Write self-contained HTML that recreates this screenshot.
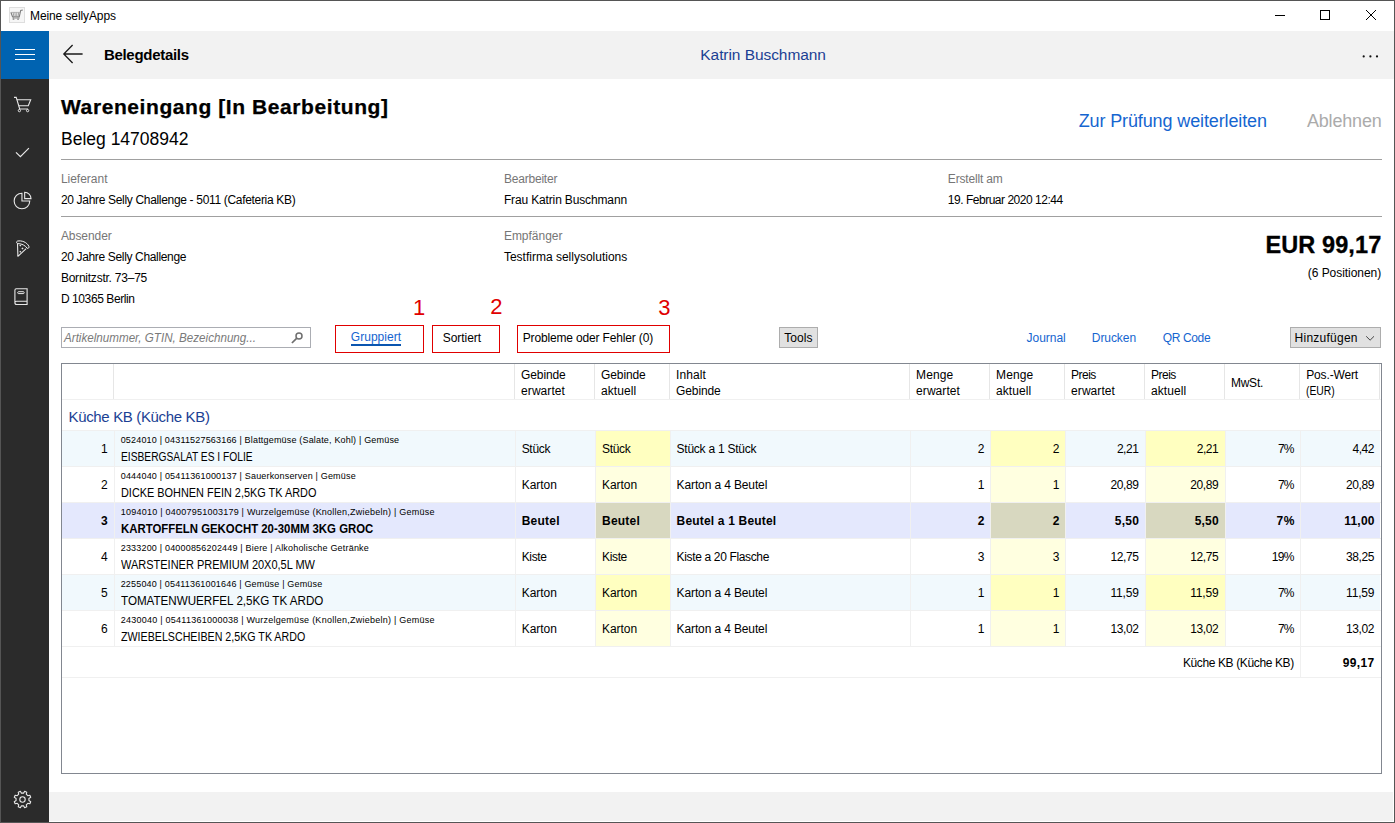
<!DOCTYPE html>
<html lang="de">
<head>
<meta charset="utf-8">
<title>Meine sellyApps</title>
<style>
html,body{margin:0;padding:0;}
body{width:1395px;height:823px;overflow:hidden;background:#fff;font-family:"Liberation Sans",sans-serif;color:#000;}
#win{position:relative;width:1395px;height:823px;overflow:hidden;background:#fff;}
.a{position:absolute;}
.t{position:absolute;white-space:nowrap;transform-origin:0 0;}
#frame{left:0;top:0;width:1393px;height:821px;border:1px solid #555;z-index:50;pointer-events:none;}
#side{left:1px;top:31px;width:48px;height:791px;background:#2b2b2b;}
#burger{left:1px;top:31px;width:48px;height:48px;background:#0063b1;}
#top{left:49px;top:31px;width:1345px;height:48px;background:#f2f2f2;}
#foot{left:49px;top:792px;width:1344px;height:29px;background:#f2f2f2;}
.hr{height:1px;background:#a0a0a0;left:61px;width:1321px;}
.rb{border:1px solid #e00000;box-sizing:border-box;}
.btn{background:#e1e1e1;border:1px solid #adadad;box-sizing:border-box;}
#search{left:61px;top:327px;width:250px;height:21px;border:1px solid #abadb3;box-sizing:border-box;background:#fff;}
#grid{left:61px;top:363px;width:1321px;height:411px;border:1px solid #828790;box-sizing:border-box;background:#fff;}
.c{position:absolute;}
.hl{position:absolute;height:1px;background:#f0f0f0;}
.vl{position:absolute;width:1px;background:#f0f0f0;}
svg{position:absolute;overflow:visible;}
</style>
</head>
<body>
<div id="win">
<!-- title bar -->
<svg class="a" style="left:9px;top:7px" width="16" height="16" viewBox="0 0 16 16">
 <rect x="0.5" y="0.5" width="15" height="15" fill="#f6f6f6" stroke="#dedede"/>
 <path d="M1.9 5.3 L3.5 9.8 H10.3 L11.7 3.5 L13.8 3" fill="none" stroke="#7d7d7d" stroke-width="1.1"/>
 <path d="M2.2 5.4 H11" fill="none" stroke="#a8a8a8" stroke-width="0.8"/>
 <path d="M4.1 5.4 L4.9 9.6 M5.9 5.4 L6.3 9.6 M7.8 5.4 L7.7 9.6 M9.7 5.4 L9.1 9.6" stroke="#999" stroke-width="0.9" fill="none"/>
 <path d="M3.4 11 H10.6" stroke="#8c8c8c" stroke-width="1"/>
 <path d="M4.5 9.8 V12.9 M9.1 9.8 V12.9 M3.6 12.4 H5.4 M8.2 12.4 H10" stroke="#9a9a9a" stroke-width="0.9"/>
</svg>
<svg class="a" style="left:1275px;top:10px" width="102" height="11" viewBox="0 0 102 11">
 <path d="M0 5.5 H10" stroke="#000" stroke-width="1"/>
 <rect x="45.5" y="0.5" width="9" height="9" fill="none" stroke="#000" stroke-width="1"/>
 <path d="M91 0 L101 10 M101 0 L91 10" stroke="#000" stroke-width="1"/>
</svg>
<!-- sidebar -->
<div class="a" id="side"></div>
<div class="a" id="burger"></div>
<svg class="a" style="left:15px;top:49px" width="20" height="11" viewBox="0 0 20 11">
 <path d="M0 0.5 H20 M0 5.5 H20 M0 10.5 H20" stroke="#fff" stroke-width="1"/>
</svg>

<svg class="a" style="left:14px;top:96px" width="18" height="17" viewBox="0 0 18 17">
 <path d="M0 1.4 H2.2 L5.7 13 H14" fill="none" stroke="#e8e8e8" stroke-width="1.1"/>
 <path d="M2.9 3.7 H16.7 L14.3 9.8 H4.7" fill="none" stroke="#e8e8e8" stroke-width="1.1"/>
 <circle cx="5.4" cy="14.6" r="1.15" fill="none" stroke="#e8e8e8" stroke-width="1"/>
 <circle cx="13.6" cy="14.6" r="1.15" fill="none" stroke="#e8e8e8" stroke-width="1"/>
</svg>
<svg class="a" style="left:15px;top:147px" width="15" height="11" viewBox="0 0 15 11">
 <path d="M1 5.3 L5.4 9.7 L13.9 1.2" fill="none" stroke="#e8e8e8" stroke-width="1.2"/>
</svg>
<svg class="a" style="left:13px;top:191px" width="19" height="19" viewBox="0 0 19 19">
 <path d="M8.95 2.2 A7.8 7.8 0 1 0 16.75 10 H8.95 Z" fill="none" stroke="#e8e8e8" stroke-width="1.1"/>
 <path d="M11.67 1.3 A6.3 6.3 0 0 1 17.97 7.6 H11.67 Z" fill="none" stroke="#e8e8e8" stroke-width="1.1"/>
</svg>
<svg class="a" style="left:16px;top:239px" width="14" height="19" viewBox="0 0 14 19">
 <path d="M1.4 2.1 C5.6 1.2 10.8 3.1 12.9 7.3 C13.4 8.6 12.3 9.8 11.2 9.3 C9.4 6.5 5.6 4.5 1.8 4.6 C0.3 4.4 0.2 2.5 1.4 2.1 Z" fill="none" stroke="#f2f2f2" stroke-width="1"/>
 <path d="M1.5 4.5 L1.9 17.3 L10.2 9.7" fill="none" stroke="#e8e8e8" stroke-width="1.1" stroke-linejoin="round"/>
 <path d="M4.3 5.6 L5.3 6.6 L4.3 7.6 L3.3 6.6 Z M6.5 8.4 L7.6 9.5 L6.5 10.6 L5.4 9.5 Z M4.3 11.7 L5.3 12.7 L4.3 13.7 L3.3 12.7 Z" fill="#e8e8e8"/>
</svg>
<svg class="a" style="left:14px;top:287px" width="15" height="19" viewBox="0 0 15 19">
 <path d="M0.9 15.8 V3.2 Q0.9 1.8 2.3 1.8 H13.1 V17.5 H2.6 Q0.9 17.5 0.9 15.8 Q0.9 14.2 2.6 14.2 H13.1" fill="none" stroke="#e8e8e8" stroke-width="1.1"/>
 <rect x="3.7" y="4.7" width="6.5" height="1.9" rx="0.9" fill="none" stroke="#e8e8e8" stroke-width="1"/>
</svg>
<svg class="a" style="left:13px;top:790px" width="19" height="19" viewBox="-9.5 -9.5 19 19">
 <path d="M6.41 1.07 L8.22 2.18 L7.35 4.27 L5.29 3.78 L3.78 5.29 L4.27 7.35 L2.18 8.22 L1.07 6.41 L-1.07 6.41 L-2.18 8.22 L-4.27 7.35 L-3.78 5.29 L-5.29 3.78 L-7.35 4.27 L-8.22 2.18 L-6.41 1.07 L-6.41 -1.07 L-8.22 -2.18 L-7.35 -4.27 L-5.29 -3.78 L-3.78 -5.29 L-4.27 -7.35 L-2.18 -8.22 L-1.07 -6.41 L1.07 -6.41 L2.18 -8.22 L4.27 -7.35 L3.78 -5.29 L5.29 -3.78 L7.35 -4.27 L8.22 -2.18 L6.41 -1.07 Z" fill="none" stroke="#e8e8e8" stroke-width="1.1" stroke-linejoin="round"/>
 <circle cx="0" cy="0" r="2.7" fill="none" stroke="#e8e8e8" stroke-width="1.1"/>
</svg>

<!-- top bar -->
<div class="a" id="top"></div>
<svg class="a" style="left:63px;top:44px" width="20" height="20" viewBox="0 0 20 20">
 <path d="M0.8 10 H19.6 M9.6 1 L0.8 10 L9.6 19" fill="none" stroke="#1a1a1a" stroke-width="1.3"/>
</svg>
<svg class="a" style="left:1362px;top:55px" width="16" height="3" viewBox="0 0 16 3">
 <circle cx="1.7" cy="1.4" r="1.1" fill="#111"/><circle cx="8.4" cy="1.4" r="1.1" fill="#111"/><circle cx="15" cy="1.4" r="1.1" fill="#111"/>
</svg>
<!-- content rules -->
<div class="a hr" style="top:159px"></div>
<div class="a hr" style="top:216px"></div>
<!-- toolbar -->
<div class="a" id="search"></div>
<svg class="a" style="left:291px;top:332px" width="12" height="12" viewBox="0 0 12 12">
 <circle cx="8" cy="3.9" r="3" fill="none" stroke="#6e6e6e" stroke-width="1.5"/>
 <path d="M5.6 6.3 L0.9 11" stroke="#6e6e6e" stroke-width="1.7"/>
</svg>
<div class="a rb" style="left:335px;top:325px;width:89px;height:28px"></div>
<div class="a" style="left:351px;top:344px;width:50px;height:2px;background:#0a55b0"></div>
<div class="a rb" style="left:432px;top:325px;width:68px;height:28px"></div>
<div class="a rb" style="left:517px;top:325px;width:153px;height:28px"></div>
<div class="a btn" style="left:779px;top:327px;width:39px;height:21px"></div>
<div class="a btn" style="left:1290px;top:327px;width:91px;height:21px"></div>
<svg class="a" style="left:1366px;top:336px" width="9" height="5" viewBox="0 0 9 5">
 <path d="M0.2 0.3 L4.1 4.2 L8 0.3" fill="none" stroke="#444" stroke-width="1"/>
</svg>
<!-- grid -->
<div class="a" id="grid">
<div class="c" style="left:0px;top:67px;width:1318px;height:35px;background:#f1f9fd"></div>
<div class="c" style="left:534px;top:67px;width:74px;height:35px;background:#ffffc0"></div>
<div class="c" style="left:929px;top:67px;width:74px;height:35px;background:#ffffc0"></div>
<div class="c" style="left:1084px;top:67px;width:79px;height:35px;background:#ffffc0"></div>
<div class="c" style="left:534px;top:103px;width:74px;height:35px;background:#ffffe0"></div>
<div class="c" style="left:929px;top:103px;width:74px;height:35px;background:#ffffe0"></div>
<div class="c" style="left:1084px;top:103px;width:79px;height:35px;background:#ffffe0"></div>
<div class="c" style="left:0px;top:139px;width:1318px;height:35px;background:#e4e8fd"></div>
<div class="c" style="left:534px;top:139px;width:74px;height:35px;background:#d8d8c0"></div>
<div class="c" style="left:929px;top:139px;width:74px;height:35px;background:#d8d8c0"></div>
<div class="c" style="left:1084px;top:139px;width:79px;height:35px;background:#d8d8c0"></div>
<div class="c" style="left:534px;top:175px;width:74px;height:35px;background:#ffffe0"></div>
<div class="c" style="left:929px;top:175px;width:74px;height:35px;background:#ffffe0"></div>
<div class="c" style="left:1084px;top:175px;width:79px;height:35px;background:#ffffe0"></div>
<div class="c" style="left:0px;top:211px;width:1318px;height:35px;background:#f1f9fd"></div>
<div class="c" style="left:534px;top:211px;width:74px;height:35px;background:#ffffc0"></div>
<div class="c" style="left:929px;top:211px;width:74px;height:35px;background:#ffffc0"></div>
<div class="c" style="left:1084px;top:211px;width:79px;height:35px;background:#ffffc0"></div>
<div class="c" style="left:534px;top:247px;width:74px;height:35px;background:#ffffe0"></div>
<div class="c" style="left:929px;top:247px;width:74px;height:35px;background:#ffffe0"></div>
<div class="c" style="left:1084px;top:247px;width:79px;height:35px;background:#ffffe0"></div>
<div class="hl" style="left:0px;top:35px;width:1319px"></div>
<div class="hl" style="left:0px;top:66px;width:1319px"></div>
<div class="hl" style="left:0px;top:102px;width:1319px"></div>
<div class="hl" style="left:0px;top:138px;width:1319px"></div>
<div class="hl" style="left:0px;top:174px;width:1319px"></div>
<div class="hl" style="left:0px;top:210px;width:1319px"></div>
<div class="hl" style="left:0px;top:246px;width:1319px"></div>
<div class="hl" style="left:0px;top:282px;width:1319px"></div>
<div class="hl" style="left:0px;top:313px;width:1319px"></div>
<div class="vl" style="left:51px;top:0px;height:35px;background:#e6e6e6"></div>
<div class="vl" style="left:52px;top:67px;height:215px"></div>
<div class="vl" style="left:452px;top:0px;height:35px;background:#e6e6e6"></div>
<div class="vl" style="left:453px;top:67px;height:215px"></div>
<div class="vl" style="left:532px;top:0px;height:35px;background:#e6e6e6"></div>
<div class="vl" style="left:533px;top:67px;height:215px"></div>
<div class="vl" style="left:607px;top:0px;height:35px;background:#e6e6e6"></div>
<div class="vl" style="left:608px;top:67px;height:215px"></div>
<div class="vl" style="left:847px;top:0px;height:35px;background:#e6e6e6"></div>
<div class="vl" style="left:848px;top:67px;height:215px"></div>
<div class="vl" style="left:927px;top:0px;height:35px;background:#e6e6e6"></div>
<div class="vl" style="left:928px;top:67px;height:215px"></div>
<div class="vl" style="left:1002px;top:0px;height:35px;background:#e6e6e6"></div>
<div class="vl" style="left:1003px;top:67px;height:215px"></div>
<div class="vl" style="left:1082px;top:0px;height:35px;background:#e6e6e6"></div>
<div class="vl" style="left:1083px;top:67px;height:215px"></div>
<div class="vl" style="left:1162px;top:0px;height:35px;background:#e6e6e6"></div>
<div class="vl" style="left:1163px;top:67px;height:215px"></div>
<div class="vl" style="left:1237px;top:0px;height:35px;background:#e6e6e6"></div>
<div class="vl" style="left:1238px;top:67px;height:215px"></div>
<div class="vl" style="left:1317px;top:0px;height:35px;background:#e6e6e6"></div>
<div class="vl" style="left:1238px;top:283px;height:30px"></div>
</div>
<div class="a" id="foot"></div>
<div class="grp" id="titlebar">
<span class="t" style="left:30.00px;top:8px;font-size:12px;line-height:17px;letter-spacing:-0.098px">Meine sellyApps</span>
</div>
<div class="grp" id="topbar">
<span class="t" style="left:103.90px;top:44px;font-size:15px;line-height:21px;font-weight:700;letter-spacing:-0.289px">Belegdetails</span>
<span class="t" style="left:700.30px;top:44px;font-size:15.5px;line-height:22px;color:#1b3f94;letter-spacing:-0.064px">Katrin Buschmann</span>
</div>
<div class="grp" id="doc-head">
<span class="t" style="left:61.00px;top:93px;font-size:20px;line-height:28px;font-weight:700;letter-spacing:0.553px;transform:scaleX(1.0500);-webkit-text-stroke:0.25px #000">Wareneingang [In Bearbeitung]</span>
<span class="t" style="left:61.00px;top:127px;font-size:17.5px;line-height:24px;letter-spacing:0.001px">Beleg 14708942</span>
<span class="t" style="left:1078.70px;top:109px;font-size:18px;line-height:25px;color:#1565d0;letter-spacing:-0.121px">Zur Prüfung weiterleiten</span>
<span class="t" style="left:1306.90px;top:109px;font-size:18px;line-height:25px;color:#ababab;letter-spacing:-0.168px">Ablehnen</span>
</div>
<div class="grp" id="doc-info">
<span class="t" style="left:60.90px;top:171px;font-size:12px;line-height:17px;color:#767676;letter-spacing:-0.013px">Lieferant</span>
<span class="t" style="left:60.90px;top:192px;font-size:12px;line-height:17px;letter-spacing:-0.321px">20 Jahre Selly Challenge - 5011 (Cafeteria KB)</span>
<span class="t" style="left:503.90px;top:171px;font-size:12px;line-height:17px;color:#767676;letter-spacing:-0.197px">Bearbeiter</span>
<span class="t" style="left:503.90px;top:192px;font-size:12px;line-height:17px;letter-spacing:-0.143px">Frau Katrin Buschmann</span>
<span class="t" style="left:947.80px;top:171px;font-size:12px;line-height:17px;color:#767676;letter-spacing:-0.169px">Erstellt am</span>
<span class="t" style="left:947.80px;top:192px;font-size:12px;line-height:17px;letter-spacing:-0.478px">19. Februar 2020 12:44</span>
<span class="t" style="left:60.90px;top:228px;font-size:12px;line-height:17px;color:#767676;letter-spacing:-0.068px">Absender</span>
<span class="t" style="left:60.90px;top:249px;font-size:12px;line-height:17px;letter-spacing:-0.344px">20 Jahre Selly Challenge</span>
<span class="t" style="left:60.90px;top:270px;font-size:12px;line-height:17px;letter-spacing:-0.229px">Bornitzstr. 73–75</span>
<span class="t" style="left:60.90px;top:291px;font-size:12px;line-height:17px;letter-spacing:-0.407px">D 10365 Berlin</span>
<span class="t" style="left:503.90px;top:228px;font-size:12px;line-height:17px;color:#767676;letter-spacing:-0.013px">Empfänger</span>
<span class="t" style="left:503.90px;top:249px;font-size:12px;line-height:17px;letter-spacing:0.001px">Testfirma sellysolutions</span>
</div>
<div class="grp" id="doc-total">
<span class="t" style="left:1265.50px;top:229px;font-size:23.5px;line-height:33px;font-weight:700;letter-spacing:0.093px;-webkit-text-stroke:0.3px #000">EUR 99,17</span>
<span class="t" style="left:1307.80px;top:265px;font-size:12px;line-height:17px;letter-spacing:-0.050px">(6 Positionen)</span>
</div>
<div class="grp" id="annotations">
<span class="t" style="left:413.10px;top:292px;font-size:22px;line-height:31px;color:#e00000">1</span>
<span class="t" style="left:490.30px;top:291px;font-size:22px;line-height:31px;color:#e00000">2</span>
<span class="t" style="left:658.30px;top:292px;font-size:22px;line-height:31px;color:#e00000">3</span>
</div>
<div class="grp" id="toolbar">
<span class="t" style="left:63.50px;top:329px;font-size:13px;line-height:18px;color:#7a7a7a;font-style:italic;transform:scaleX(0.8947)">Artikelnummer, GTIN, Bezeichnung...</span>
<span class="t" style="left:350.80px;top:329px;font-size:12px;line-height:17px;color:#1565d0;letter-spacing:0.034px">Gruppiert</span>
<span class="t" style="left:442.70px;top:330px;font-size:12px;line-height:17px;letter-spacing:-0.041px">Sortiert</span>
<span class="t" style="left:522.70px;top:330px;font-size:12px;line-height:17px;letter-spacing:-0.155px">Probleme oder Fehler (0)</span>
<span class="t" style="left:784.20px;top:330px;font-size:12px;line-height:17px;letter-spacing:0.071px">Tools</span>
<span class="t" style="left:1026.60px;top:330px;font-size:12px;line-height:17px;color:#1565d0;letter-spacing:-0.043px">Journal</span>
<span class="t" style="left:1091.80px;top:330px;font-size:12px;line-height:17px;color:#1565d0;letter-spacing:-0.065px">Drucken</span>
<span class="t" style="left:1162.70px;top:330px;font-size:12px;line-height:17px;color:#1565d0;letter-spacing:-0.355px">QR Code</span>
<span class="t" style="left:1294.60px;top:330px;font-size:12px;line-height:17px;letter-spacing:0.242px">Hinzufügen</span>
</div>
<div class="grp" id="grid-head">
<span class="t" style="left:521.10px;top:367px;font-size:12px;line-height:17px;letter-spacing:-0.132px">Gebinde</span>
<span class="t" style="left:521.10px;top:383px;font-size:12px;line-height:17px;letter-spacing:0.058px">erwartet</span>
<span class="t" style="left:601.10px;top:367px;font-size:12px;line-height:17px;letter-spacing:-0.132px">Gebinde</span>
<span class="t" style="left:601.10px;top:383px;font-size:12px;line-height:17px;letter-spacing:0.053px">aktuell</span>
<span class="t" style="left:676.10px;top:367px;font-size:12px;line-height:17px;letter-spacing:0.096px">Inhalt</span>
<span class="t" style="left:676.10px;top:383px;font-size:12px;line-height:17px;letter-spacing:-0.132px">Gebinde</span>
<span class="t" style="left:916.10px;top:367px;font-size:12px;line-height:17px;letter-spacing:0.114px">Menge</span>
<span class="t" style="left:916.10px;top:383px;font-size:12px;line-height:17px;letter-spacing:0.058px">erwartet</span>
<span class="t" style="left:996.10px;top:367px;font-size:12px;line-height:17px;letter-spacing:0.114px">Menge</span>
<span class="t" style="left:996.10px;top:383px;font-size:12px;line-height:17px;letter-spacing:0.053px">aktuell</span>
<span class="t" style="left:1071.10px;top:367px;font-size:12px;line-height:17px;letter-spacing:-0.546px">Preis</span>
<span class="t" style="left:1071.10px;top:383px;font-size:12px;line-height:17px;letter-spacing:0.058px">erwartet</span>
<span class="t" style="left:1151.10px;top:367px;font-size:12px;line-height:17px;letter-spacing:-0.546px">Preis</span>
<span class="t" style="left:1151.10px;top:383px;font-size:12px;line-height:17px;letter-spacing:0.053px">aktuell</span>
<span class="t" style="left:1306.20px;top:367px;font-size:12px;line-height:17px;letter-spacing:-0.142px">Pos.-Wert</span>
<span class="t" style="left:1306.20px;top:383px;font-size:12px;line-height:17px;transform:scaleX(0.8622)">(EUR)</span>
<span class="t" style="left:1230.90px;top:375px;font-size:12px;line-height:17px;letter-spacing:-0.227px">MwSt.</span>
</div>
<div class="grp" id="grid-group">
<span class="t" style="left:68.50px;top:406px;font-size:15px;line-height:21px;color:#1b3f94;letter-spacing:-0.343px">Küche KB (Küche KB)</span>
</div>
<div class="grp" id="grid-row-1">
<span class="t" style="left:101.11px;top:441px;font-size:12px;line-height:17px">1</span>
<span class="t" style="left:120.70px;top:434px;font-size:9px;line-height:13px;letter-spacing:0.178px">0524010 | 04311527563166 | Blattgemüse (Salate, Kohl) | Gemüse</span>
<span class="t" style="left:120.70px;top:449px;font-size:12px;line-height:17px;transform:scaleX(0.8530)">EISBERGSALAT ES I FOLIE</span>
<span class="t" style="left:521.70px;top:441px;font-size:12px;line-height:17px;letter-spacing:-0.323px">Stück</span>
<span class="t" style="left:602.00px;top:441px;font-size:12px;line-height:17px;letter-spacing:-0.323px">Stück</span>
<span class="t" style="left:676.60px;top:441px;font-size:12px;line-height:17px;letter-spacing:-0.250px">Stück a 1 Stück</span>
<span class="t" style="left:977.71px;top:441px;font-size:12px;line-height:17px">2</span>
<span class="t" style="left:1052.81px;top:441px;font-size:12px;line-height:17px">2</span>
<span class="t" style="left:1116.89px;top:441px;font-size:12px;line-height:17px;letter-spacing:-0.451px">2,21</span>
<span class="t" style="left:1196.69px;top:441px;font-size:12px;line-height:17px;letter-spacing:-0.451px">2,21</span>
<span class="t" style="left:1278.12px;top:441px;font-size:12px;line-height:17px;letter-spacing:-1.061px">7%</span>
<span class="t" style="left:1352.49px;top:441px;font-size:12px;line-height:17px;letter-spacing:-0.451px">4,42</span>
</div>
<div class="grp" id="grid-row-2">
<span class="t" style="left:101.11px;top:477px;font-size:12px;line-height:17px">2</span>
<span class="t" style="left:120.70px;top:470px;font-size:9px;line-height:13px;letter-spacing:0.183px">0444040 | 05411361000137 | Sauerkonserven | Gemüse</span>
<span class="t" style="left:120.70px;top:485px;font-size:12px;line-height:17px;transform:scaleX(0.9081)">DICKE BOHNEN FEIN 2,5KG TK ARDO</span>
<span class="t" style="left:521.70px;top:477px;font-size:12px;line-height:17px;letter-spacing:-0.048px">Karton</span>
<span class="t" style="left:602.00px;top:477px;font-size:12px;line-height:17px;letter-spacing:-0.048px">Karton</span>
<span class="t" style="left:676.60px;top:477px;font-size:12px;line-height:17px;letter-spacing:-0.124px">Karton a 4 Beutel</span>
<span class="t" style="left:977.71px;top:477px;font-size:12px;line-height:17px">1</span>
<span class="t" style="left:1052.81px;top:477px;font-size:12px;line-height:17px">1</span>
<span class="t" style="left:1110.42px;top:477px;font-size:12px;line-height:17px;letter-spacing:-0.389px">20,89</span>
<span class="t" style="left:1190.22px;top:477px;font-size:12px;line-height:17px;letter-spacing:-0.389px">20,89</span>
<span class="t" style="left:1278.12px;top:477px;font-size:12px;line-height:17px;letter-spacing:-1.061px">7%</span>
<span class="t" style="left:1346.02px;top:477px;font-size:12px;line-height:17px;letter-spacing:-0.389px">20,89</span>
</div>
<div class="grp" id="grid-row-3">
<span class="t" style="left:101.11px;top:513px;font-size:12px;line-height:17px;font-weight:700">3</span>
<span class="t" style="left:120.70px;top:506px;font-size:9px;line-height:13px;letter-spacing:0.239px">1094010 | 04007951003179 | Wurzelgemüse (Knollen,Zwiebeln) | Gemüse</span>
<span class="t" style="left:120.70px;top:521px;font-size:12px;line-height:17px;font-weight:700;transform:scaleX(0.9492)">KARTOFFELN GEKOCHT 20-30MM 3KG GROC</span>
<span class="t" style="left:521.70px;top:513px;font-size:12px;line-height:17px;font-weight:700;letter-spacing:0.220px">Beutel</span>
<span class="t" style="left:602.00px;top:513px;font-size:12px;line-height:17px;font-weight:700;letter-spacing:0.220px">Beutel</span>
<span class="t" style="left:676.60px;top:513px;font-size:12px;line-height:17px;font-weight:700;letter-spacing:0.181px">Beutel a 1 Beutel</span>
<span class="t" style="left:977.71px;top:513px;font-size:12px;line-height:17px;font-weight:700">2</span>
<span class="t" style="left:1052.81px;top:513px;font-size:12px;line-height:17px;font-weight:700">2</span>
<span class="t" style="left:1114.84px;top:513px;font-size:12px;line-height:17px;font-weight:700;letter-spacing:0.234px">5,50</span>
<span class="t" style="left:1194.64px;top:513px;font-size:12px;line-height:17px;font-weight:700;letter-spacing:0.234px">5,50</span>
<span class="t" style="left:1276.54px;top:513px;font-size:12px;line-height:17px;font-weight:700;letter-spacing:0.520px">7%</span>
<span class="t" style="left:1344.24px;top:513px;font-size:12px;line-height:17px;font-weight:700;letter-spacing:0.220px">11,00</span>
</div>
<div class="grp" id="grid-row-4">
<span class="t" style="left:101.11px;top:549px;font-size:12px;line-height:17px">4</span>
<span class="t" style="left:120.70px;top:542px;font-size:9px;line-height:13px;letter-spacing:0.189px">2333200 | 04000856202449 | Biere | Alkoholische Getränke</span>
<span class="t" style="left:120.70px;top:557px;font-size:12px;line-height:17px;transform:scaleX(0.9159)">WARSTEINER PREMIUM 20X0,5L MW</span>
<span class="t" style="left:521.70px;top:549px;font-size:12px;line-height:17px;letter-spacing:-0.348px">Kiste</span>
<span class="t" style="left:602.00px;top:549px;font-size:12px;line-height:17px;letter-spacing:-0.348px">Kiste</span>
<span class="t" style="left:676.60px;top:549px;font-size:12px;line-height:17px;letter-spacing:-0.351px">Kiste a 20 Flasche</span>
<span class="t" style="left:977.71px;top:549px;font-size:12px;line-height:17px">3</span>
<span class="t" style="left:1052.81px;top:549px;font-size:12px;line-height:17px">3</span>
<span class="t" style="left:1110.42px;top:549px;font-size:12px;line-height:17px;letter-spacing:-0.389px">12,75</span>
<span class="t" style="left:1190.22px;top:549px;font-size:12px;line-height:17px;letter-spacing:-0.389px">12,75</span>
<span class="t" style="left:1271.65px;top:549px;font-size:12px;line-height:17px;letter-spacing:-0.640px">19%</span>
<span class="t" style="left:1346.02px;top:549px;font-size:12px;line-height:17px;letter-spacing:-0.389px">38,25</span>
</div>
<div class="grp" id="grid-row-5">
<span class="t" style="left:101.11px;top:585px;font-size:12px;line-height:17px">5</span>
<span class="t" style="left:120.70px;top:578px;font-size:9px;line-height:13px;letter-spacing:0.171px">2255040 | 05411361001646 | Gemüse | Gemüse</span>
<span class="t" style="left:120.70px;top:593px;font-size:12px;line-height:17px;transform:scaleX(0.9687)">TOMATENWUERFEL 2,5KG TK ARDO</span>
<span class="t" style="left:521.70px;top:585px;font-size:12px;line-height:17px;letter-spacing:-0.048px">Karton</span>
<span class="t" style="left:602.00px;top:585px;font-size:12px;line-height:17px;letter-spacing:-0.048px">Karton</span>
<span class="t" style="left:676.60px;top:585px;font-size:12px;line-height:17px;letter-spacing:-0.124px">Karton a 4 Beutel</span>
<span class="t" style="left:977.71px;top:585px;font-size:12px;line-height:17px">1</span>
<span class="t" style="left:1052.81px;top:585px;font-size:12px;line-height:17px">1</span>
<span class="t" style="left:1110.42px;top:585px;font-size:12px;line-height:17px;letter-spacing:-0.166px">11,59</span>
<span class="t" style="left:1190.22px;top:585px;font-size:12px;line-height:17px;letter-spacing:-0.166px">11,59</span>
<span class="t" style="left:1278.12px;top:585px;font-size:12px;line-height:17px;letter-spacing:-1.061px">7%</span>
<span class="t" style="left:1346.02px;top:585px;font-size:12px;line-height:17px;letter-spacing:-0.166px">11,59</span>
</div>
<div class="grp" id="grid-row-6">
<span class="t" style="left:101.11px;top:621px;font-size:12px;line-height:17px">6</span>
<span class="t" style="left:120.70px;top:614px;font-size:9px;line-height:13px;letter-spacing:0.249px">2430040 | 05411361000038 | Wurzelgemüse (Knollen,Zwiebeln) | Gemüse</span>
<span class="t" style="left:120.70px;top:629px;font-size:12px;line-height:17px;transform:scaleX(0.8891)">ZWIEBELSCHEIBEN 2,5KG TK ARDO</span>
<span class="t" style="left:521.70px;top:621px;font-size:12px;line-height:17px;letter-spacing:-0.048px">Karton</span>
<span class="t" style="left:602.00px;top:621px;font-size:12px;line-height:17px;letter-spacing:-0.048px">Karton</span>
<span class="t" style="left:676.60px;top:621px;font-size:12px;line-height:17px;letter-spacing:-0.124px">Karton a 4 Beutel</span>
<span class="t" style="left:977.71px;top:621px;font-size:12px;line-height:17px">1</span>
<span class="t" style="left:1052.81px;top:621px;font-size:12px;line-height:17px">1</span>
<span class="t" style="left:1110.42px;top:621px;font-size:12px;line-height:17px;letter-spacing:-0.389px">13,02</span>
<span class="t" style="left:1190.22px;top:621px;font-size:12px;line-height:17px;letter-spacing:-0.389px">13,02</span>
<span class="t" style="left:1278.12px;top:621px;font-size:12px;line-height:17px;letter-spacing:-1.061px">7%</span>
<span class="t" style="left:1346.02px;top:621px;font-size:12px;line-height:17px;letter-spacing:-0.389px">13,02</span>
</div>
<div class="grp" id="grid-sum">
<span class="t" style="left:1182.90px;top:655px;font-size:12px;line-height:17px;letter-spacing:-0.376px">Küche KB (Küche KB)</span>
<span class="t" style="left:1342.80px;top:655px;font-size:12px;line-height:17px;font-weight:700;letter-spacing:0.317px">99,17</span>
</div>
<div class="a" id="frame"></div>
</div>
</body>
</html>
